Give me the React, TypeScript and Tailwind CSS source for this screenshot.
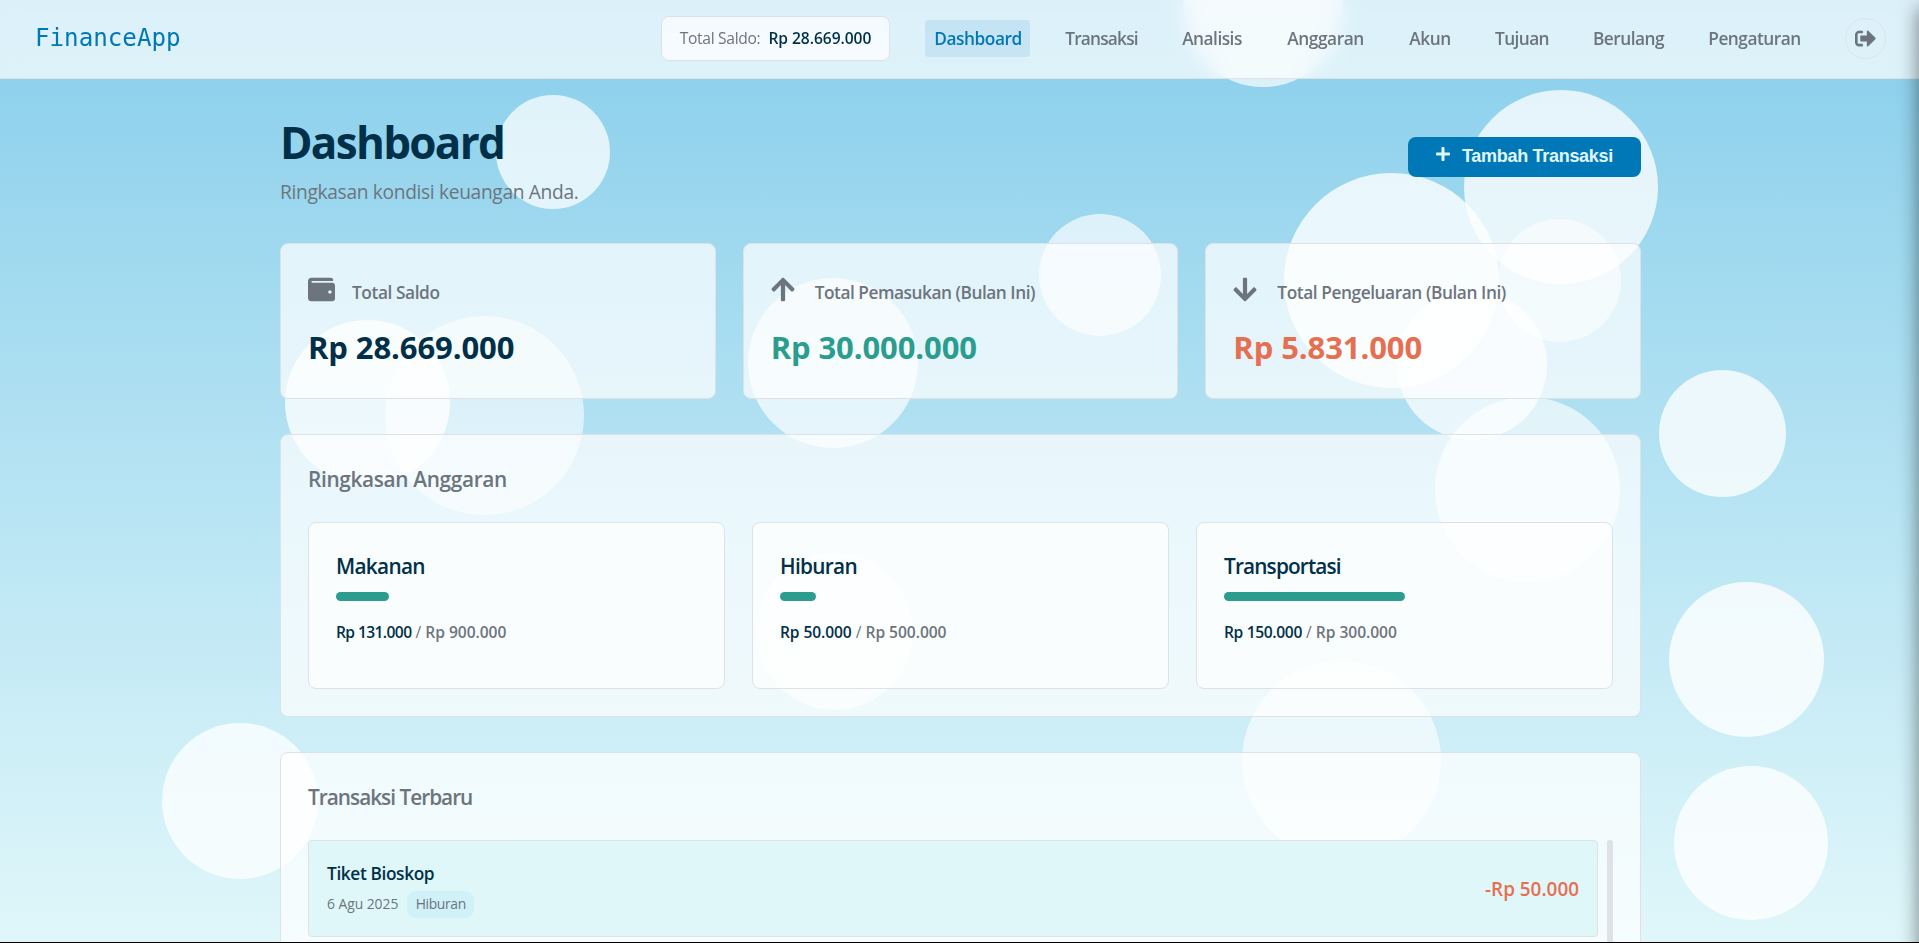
import type { ReactNode } from "react";
import { FaArrowDown, FaArrowUp, FaPlus, FaSignOutAlt, FaWallet } from "react-icons/fa";

type Bubble = { x: number; y: number; d: number; o: number };

const bubbles: Bubble[] = [
  { x: 553, y: 152, d: 114, o: 0.73 },
  { x: 1262.5, y: 7, d: 160, o: 0.68 },
  { x: 1561, y: 186.5, d: 194, o: 0.76 },
  { x: 1391.6, y: 280.5, d: 215, o: 0.79 },
  { x: 1559.5, y: 280, d: 123, o: 0.58 },
  { x: 1472, y: 365, d: 150, o: 0.72 },
  { x: 1527.7, y: 489.5, d: 185, o: 0.63 },
  { x: 1722.5, y: 433.7, d: 127, o: 0.77 },
  { x: 1746.6, y: 659.7, d: 155, o: 0.79 },
  { x: 1750.5, y: 842.6, d: 154, o: 0.78 },
  { x: 1341.3, y: 760, d: 199, o: 0.61 },
  { x: 239.7, y: 801, d: 156, o: 0.74 },
  { x: 367.8, y: 402.3, d: 165, o: 0.78 },
  { x: 484, y: 415.6, d: 199, o: 0.56 },
  { x: 833.3, y: 362.7, d: 170, o: 0.67 },
  { x: 1099.6, y: 275.3, d: 122, o: 0.65 },
  { x: 834, y: 631, d: 157, o: 0.6 },
];

const navItems = [
  { label: "Dashboard", cls: "w-[105px] pl-px tracking-[-0.45px] bg-[#0077b6]/10 text-[#0077b6]" },
  { label: "Transaksi", cls: "w-[89px] tracking-[-0.8px] text-[#6c757d]" },
  { label: "Analisis", cls: "w-[78px] tracking-[-0.5px] text-[#6c757d]" },
  { label: "Anggaran", cls: "w-[95px] tracking-[-0.42px] text-[#6c757d]" },
  { label: "Akun", cls: "w-[60px] tracking-[-0.5px] text-[#6c757d]" },
  { label: "Tujuan", cls: "w-[70px] tracking-[-0.6px] text-[#6c757d]" },
  { label: "Berulang", cls: "w-[89px] tracking-[-0.5px] text-[#6c757d]" },
  { label: "Pengaturan", cls: "w-[109px] tracking-[-0.5px] text-[#6c757d]" },
];

const budgets = [
  { name: "Makanan", spent: "Rp 131.000", limit: "Rp 900.000", pct: 14.56, nameCls: "tracking-[-0.7px]", spentCls: "tracking-[-0.6px]" },
  { name: "Hiburan", spent: "Rp 50.000", limit: "Rp 500.000", pct: 10, nameCls: "tracking-[-0.7px]", spentCls: "tracking-[-0.1px]" },
  { name: "Transportasi", spent: "Rp 150.000", limit: "Rp 300.000", pct: 50, nameCls: "tracking-[-0.85px]", spentCls: "tracking-[-0.35px]" },
];

function Header() {
  return (
    <header className="relative flex h-[79px] items-center border-b border-[#dee2e6] bg-white/70 pr-[33px] pb-px pl-[35px] backdrop-blur-[10px]">
      <div className="font-['DejaVu_Sans_Mono',monospace] text-[24.2px] leading-none text-[#0077b6]">FinanceApp</div>
      <div className="ml-auto flex items-center">
        <div className="flex h-[45px] w-[229px] items-center justify-center gap-2 rounded-lg border border-[#dee2e6] bg-white/70 text-[15.6px] whitespace-nowrap">
          <span className="tracking-[-0.3px] text-[#6c757d]">Total Saldo:</span>
          <span className="font-semibold tracking-[-0.05px] text-[#003049]">Rp 28.669.000</span>
        </div>
        <nav className="ml-[35px] flex gap-[27px]">
          {navItems.map((n) => (
            <a key={n.label} className={`flex h-[37px] items-center justify-center rounded text-[17.3px] font-semibold ${n.cls}`}>
              {n.label}
            </a>
          ))}
        </nav>
        <button className="ml-9 flex size-[41px] items-center justify-center rounded-full border border-[#dee2e6] text-[#6c757d]">
          <FaSignOutAlt size={21} />
        </button>
      </div>
    </header>
  );
}

function StatCard({ icon, label, value, labelCls, valueCls }: { icon: ReactNode; label: string; value: string; labelCls: string; valueCls: string }) {
  return (
    <div className="h-[156px] rounded-lg border border-[#dee2e6] bg-white/70 p-[27px]">
      <div className="flex h-9 items-center gap-[17px] text-[#6c757d]">
        <span className="w-[27px]">{icon}</span>
        <span className={`pt-[7px] text-[17.3px] font-semibold whitespace-nowrap ${labelCls}`}>{label}</span>
      </div>
      <div className={`mt-4 text-[31px] leading-[48px] font-bold tracking-[-0.1px] ${valueCls}`}>{value}</div>
    </div>
  );
}

export default function App() {
  return (
    <div className="relative h-[943px] overflow-hidden bg-linear-to-b from-[#87ceeb] to-[#e0f7fa] font-['Open_Sans','Noto_Sans',sans-serif]">
      {bubbles.map((b, i) => (
        <div
          key={i}
          className="absolute rounded-full bg-white"
          style={{ left: b.x - b.d / 2, top: b.y - b.d / 2, width: b.d, height: b.d, opacity: b.o }}
        />
      ))}

      <Header />

      <main className="relative ml-[280px] w-[1361px] pt-9">
        <div className="flex items-start justify-between">
          <div>
            <h1 className="text-[44px] leading-[54px] font-bold tracking-[-1.7px] text-[#003049]">Dashboard</h1>
            <p className="mt-2 text-[19.2px] leading-[30px] tracking-[-0.34px] text-[#6c757d]">Ringkasan kondisi keuangan Anda.</p>
          </div>
          <button className="mt-[22px] flex h-10 w-[233px] items-center gap-[11px] rounded-lg bg-[#0077b6] pl-[27px] font-['Liberation_Sans',Arial,sans-serif] text-[18px] font-bold whitespace-nowrap text-[#e0f7fa]">
            <FaPlus size={16} className="-mt-[6px] w-4 shrink-0" />
            <span className="-mt-0.5 tracking-[-0.3px]">Tambah Transaksi</span>
          </button>
        </div>

        <section className="mt-9 grid grid-cols-3 gap-[27px]">
          <StatCard icon={<FaWallet size={27} />} label="Total Saldo" value="Rp 28.669.000" labelCls="tracking-[-0.42px]" valueCls="text-[#003049]" />
          <StatCard icon={<FaArrowUp size={27} className="w-6" />} label="Total Pemasukan (Bulan Ini)" value="Rp 30.000.000" labelCls="tracking-[-0.47px]" valueCls="text-[#2a9d8f]" />
          <StatCard icon={<FaArrowDown size={27} className="w-6" />} label="Total Pengeluaran (Bulan Ini)" value="Rp 5.831.000" labelCls="tracking-[-0.43px]" valueCls="text-[#e76f51]" />
        </section>

        <section className="mt-[35px] h-[283px] rounded-lg border border-[#dee2e6] bg-white/70 p-[27px]">
          <h2 className="text-[20.8px] leading-[34px] font-semibold tracking-[-0.33px] text-[#6c757d]">Ringkasan Anggaran</h2>
          <div className="mt-[26px] grid grid-cols-3 gap-[27px]">
            {budgets.map((b) => (
              <div key={b.name} className="h-[167px] rounded-lg border border-[#dee2e6] bg-white/70 p-[27px]">
                <h3 className={`text-[20.8px] leading-[33px] font-semibold text-[#003049] ${b.nameCls}`}>{b.name}</h3>
                <div className="mt-[9px] h-[9px]">
                  <div className="h-full rounded-full bg-[#2a9d8f]" style={{ width: `${b.pct}%` }} />
                </div>
                <p className="mt-[17px] text-[15.6px] leading-7 text-[#6c757d]">
                  <span className={`font-semibold text-[#003049] ${b.spentCls}`}>{b.spent}</span> / <span className="font-semibold tracking-[-0.05px]">{b.limit}</span>
                </p>
              </div>
            ))}
          </div>
        </section>

        <section className="mt-[35px] h-[420px] rounded-lg border border-[#dee2e6] bg-white/70 p-[27px]">
          <h2 className="text-[20.8px] leading-[34px] font-semibold tracking-[-1px] text-[#6c757d]">Transaksi Terbaru</h2>
          <div className="mt-[26px] flex gap-[9px]">
            <div className="flex h-[97px] flex-1 items-center justify-between rounded border border-[#dee2e6] bg-[#e0f7fa] px-[18px]">
              <div>
                <div className="text-[17.3px] leading-[27px] font-semibold tracking-[-0.38px] text-[#003049]">Tiket Bioskop</div>
                <div className="mt-1 flex h-[27px] items-center gap-[9px] text-[13.9px] text-[#6c757d]">
                  <span className="pt-px tracking-[-0.05px]">6 Agu 2025</span>
                  <span className="flex h-[27px] w-[67px] items-center justify-center rounded-[9px] bg-[#d1f1f9] pt-px tracking-[-0.35px]">Hiburan</span>
                </div>
              </div>
              <div className="pt-px text-[18.9px] font-semibold text-[#e76f51]">-Rp 50.000</div>
            </div>
            <div className="h-[200px] w-1.5 rounded-full bg-[#dee2e6]" />
          </div>
        </section>
      </main>

      <div className="pointer-events-none absolute top-2 -right-5 -bottom-5 w-5 shadow-[0_0_20px_rgba(0,0,0,0.5)]" />
      <div className="absolute inset-x-0 bottom-0 h-px bg-black" />
    </div>
  );
}
